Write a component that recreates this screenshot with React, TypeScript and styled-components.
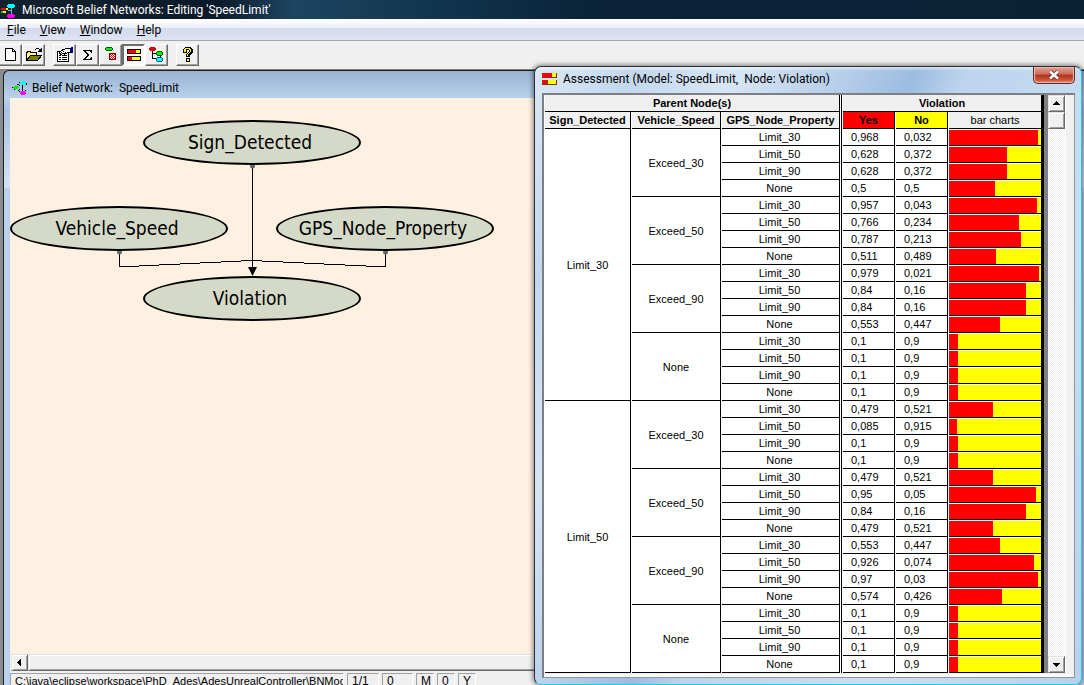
import React from 'react';
import styled, { createGlobalStyle } from 'styled-components';

const uiFont = 'Roboto, "Open Sans", sans-serif';
const gridFont = '"Liberation Sans", Arial, sans-serif';

const GlobalStyle = createGlobalStyle`
  * { box-sizing: border-box; }
  body { margin: 0; background: #f0f0f0; font-family: ${uiFont}; font-size: 12px; color: #000; }
  button { font: inherit; color: inherit; margin: 0; padding: 0; border-radius: 0; }
  svg { display: block; flex: none; }
`;

const Desktop = styled.div`
  position: relative;
  display: flex;
  flex-direction: column;
  height: 100vh;
  overflow: hidden;
`;

const TitleBar = styled.header`
  display: flex;
  align-items: center;
  gap: 6px;
  height: 19px;
  flex: none;
  color: #fff;
  background: linear-gradient(90deg, #14222f 0%, #0b1a2a 20%, #1d4560 27%, #12354f 40%, #0a2338 55%, #0b2136 100%);
`;

const AppTitle = styled.h1`
  margin: 0;
  font-size: 12px;
  font-weight: 400;
  line-height: 18px;
  white-space: pre;
`;

const MenuBar = styled.nav`
  display: flex;
  align-items: center;
  flex: none;
  height: 22px;
  padding-left: 7px;
  gap: 14px;
  border-top: 1px solid #fff;
  border-bottom: 1px solid #a9abb0;
  background: linear-gradient(#ffffff 0%, #e9edf7 40%, #d4daec 42%, #dfe4f3 100%);
`;

const MenuItem = styled.button`
  border: 0;
  background: none;
  line-height: 18px;
`;

const Toolbar = styled.div`
  display: flex;
  flex: none;
  height: 28px;
  margin-left: -1px;
  padding-top: 3px;
  background: #f0f0f0;
`;

const ToolGroup = styled.div`
  display: flex;
  margin-right: 8px;
`;

const ToolButton = styled.button<{ $pressed?: boolean }>`
  display: flex;
  align-items: center;
  justify-content: center;
  width: 23px;
  height: 22px;
  border: ${p => (p.$pressed ? '2px' : '1px')} solid;
  border-color: ${p => (p.$pressed ? '#6d6d6d #fff #fff #6d6d6d' : '#fff #696969 #696969 #fff')};
  box-shadow: ${p => (p.$pressed ? 'none' : 'inset -1px -1px 0 #a0a0a0')};
  background: ${p => (p.$pressed ? '#f8f8f8' : '#f0f0f0')};
`;

const Workspace = styled.main`
  flex: 1;
  min-height: 0;
  display: flex;
  padding: 0 0 0 3px;
  border-top: 1px solid #808080;
  background: #8a8c90;
`;

const NetworkWindow = styled.section`
  flex: 1;
  display: flex;
  flex-direction: column;
  min-width: 0;
  padding: 0 6px;
  border: solid #1b1d20;
  border-width: 1px 0 0 1px;
  border-top-left-radius: 6px;
  background: linear-gradient(#9ab3d2 0, #b9d1ea 27px, #a9c3e2 40px, #d4e3f3 116px, #b9d1ea 117px);
`;

const NetworkTitle = styled.div`
  display: flex;
  align-items: center;
  gap: 4px;
  height: 27px;
  flex: none;
  padding: 6px 0 0 2px;
`;

const WindowCaption = styled.h2`
  margin: 0;
  font-size: 12px;
  font-weight: 400;
  line-height: 16px;
  white-space: pre;
`;

const Canvas = styled.div`
  position: relative;
  flex: 1;
  min-height: 0;
  background: #fff1e2;
`;

const Edges = styled.svg`
  position: absolute;
  left: 0;
  top: 0;
`;

const Node = styled.div<{ $x: number; $y: number }>`
  position: absolute;
  left: ${p => p.$x}px;
  top: ${p => p.$y}px;
  width: 218px;
  height: 45px;
  border: 2px solid #000;
  border-radius: 50%;
  background: #d5dac8;
  font-family: "DejaVu Sans Condensed", "DejaVu Sans", sans-serif;
  font-size: 19px;
  line-height: 40px;
  text-align: center;
  padding-right: 4px;
`;

const HScroll = styled.div`
  display: flex;
  flex: none;
  height: 17px;
  padding-left: 1px;
  background: #f0f0f0;
`;

const ScrollPart = styled.button<{ $grow?: boolean }>`
  display: flex;
  align-items: center;
  justify-content: center;
  flex: ${p => (p.$grow ? '1' : 'none')};
  width: 17px;
  height: 17px;
  border: 1px solid;
  border-color: #e3e3e3 #696969 #696969 #e3e3e3;
  box-shadow: inset 1px 1px 0 #fff, inset -1px -1px 0 #a0a0a0;
  background: #f0f0f0;
`;

const StatusBar = styled.footer`
  display: flex;
  gap: 3px;
  flex: none;
  height: 14px;
  padding-top: 2px;
  overflow: hidden;
  background: #f0f0f0;
  font-family: ${gridFont};
`;

const StatusCell = styled.div<{ $w: number; $small?: boolean }>`
  width: ${p => p.$w}px;
  height: 18px;
  padding-left: 4px;
  border: 1px solid;
  border-color: #a0a0a0 #fff #fff #a0a0a0;
  font-size: ${p => (p.$small ? 11 : 12)}px;
  line-height: 14px;
  white-space: nowrap;
  overflow: hidden;
`;

const AssessmentWindow = styled.section`
  position: absolute;
  left: 534px;
  top: 66px;
  padding: 0 6px 6px 7px;
  border: 1px solid #2a2f36;
  border-right-color: #25c6e4;
  border-bottom-color: #25c6e4;
  border-radius: 7px;
  background:
    linear-gradient(#ffffff90, #ffffff00 4px),
    linear-gradient(115deg, #dbe8f5 0%, #c3d8ee 12%, #d7e6f5 24%, #b4cde8 38%, #9dbce0 46%, #bcd4ed 52%, #c9dff3 75%, #b8d2ec 100%);
  box-shadow: 0 0 5px 1px #00000080;
`;

const AssessmentTitle = styled.div`
  display: flex;
  justify-content: space-between;
  height: 26px;
`;

const CaptionGroup = styled.div`
  display: flex;
  align-items: center;
  gap: 5px;
  padding-bottom: 2px;
`;

const CloseButton = styled.button`
  display: flex;
  align-items: center;
  justify-content: center;
  width: 42px;
  height: 17px;
  border: 1px solid #5b2a26;
  border-top: 0;
  border-radius: 0 0 5px 5px;
  box-shadow: inset 0 0 1px 1px #f2b7a5;
  background: linear-gradient(#e0a295 0%, #cc6b5a 45%, #b3301a 50%, #c9543a 80%, #e08a62 100%);
`;

const Pane = styled.div`
  display: flex;
  border: solid;
  border-width: 2px 1px 1px 2px;
  border-color: #7d7f82 #8e959d #8e959d #7d7f82;
  padding-bottom: 4px;
  background: #f0f0f0;
  box-shadow: inset 0 -3px 0 #fafafa;
`;

const GridView = styled.div`
  width: 497px;
  overflow: hidden;
  background: #fff;
`;

const RightRule = styled.div`
  width: 7px;
  border-left: 3px solid #000;
  background: #808080;
`;

const DataTable = styled.table`
  table-layout: fixed;
  width: 498px;
  border-collapse: separate;
  border-spacing: 1px 0;
  font-family: ${gridFont};
  font-size: 11px;
  line-height: 16px;
`;

const HeadCell = styled.th<{ $bg?: string; $plain?: boolean; $open?: boolean }>`
  height: 17px;
  padding: 0;
  overflow: hidden;
  white-space: nowrap;
  font-weight: ${p => (p.$plain ? 400 : 700)};
  border-bottom: 1px solid #000;
  border-right: ${p => (p.$open ? '0' : '1px solid #000')};
  background: ${p => p.$bg ?? '#f0f0f0'};
`;

const Cell = styled.td<{ $value?: boolean }>`
  height: 17px;
  padding: ${p => (p.$value ? '0 0 0 8px' : '0 2px 0 0')};
  text-align: ${p => (p.$value ? 'left' : 'center')};
  border-bottom: 1px solid #000;
  border-right: 1px solid #000;
`;

const ParentCell = styled.td`
  padding: 0;
  text-align: center;
  vertical-align: middle;
  border-bottom: 1px solid #000;
  border-right: 1px solid #000;
`;

const Divider = styled.td`
  padding: 0;
  background: #000;
`;

const BarCell = styled.td`
  height: 17px;
  padding: 1px 0 0;
  border-bottom: 1px solid #000;
`;

const Bar = styled.div`
  height: 15px;
  background: #ff0;
`;

const BarFill = styled.div`
  height: 15px;
  background: #f00;
`;

const VScroll = styled.div`
  display: flex;
  flex-direction: column;
  width: 17px;
  background: repeating-conic-gradient(#ffffff 0 25%, #f0f0f0 0 50%) 0 0 / 2px 2px;
`;

const Track = styled.div`
  flex: 1;
`;

const Gutter = styled.div`
  width: 9px;
  border-left: 1px solid #fff;
`;

const signs = ['Limit_30', 'Limit_50'];
const speeds = ['Exceed_30', 'Exceed_50', 'Exceed_90', 'None'];
const limits = ['Limit_30', 'Limit_50', 'Limit_90', 'None'];
const yes = [
  968, 628, 628, 500, 957, 766, 787, 511, 979, 840, 840, 553, 100, 100, 100, 100,
  479, 85, 100, 100, 479, 950, 840, 479, 553, 926, 970, 574, 100, 100, 100, 100,
];
const format = (n: number) => String(n / 1000).replace('.', ',');

const Pixels = ({ w = 16, h = 16, children }: { w?: number; h?: number; children: React.ReactNode }) => (
  <svg width={w} height={h} viewBox={`0 0 ${w} ${h}`} shapeRendering="crispEdges" aria-hidden="true">
    {children}
  </svg>
);

const AppIcon = () => (
  <Pixels>
    <path d="M1 6h5v2H1z" fill="#e00" />
    <path d="M6 6h2v2H6zM1 9h5v2H1z" fill="#ff0" />
    <path d="M1 9h2v2H1z" fill="#0c0" />
    <path d="M11 5v8M8 8h3" stroke="#5fc0c0" fill="none" />
    <path d="M8 2h6v1h1v2h-1v1H8V5H7V3h1z" fill="#0ff" />
    <path d="M8 12h6v1h1v2h-1v1H8v-1H7v-2h1z" fill="#f0f" />
  </Pixels>
);

const NetworkIcon = () => (
  <Pixels>
    <path d="M10.500 5v6" stroke="#000" fill="none" />
    <path d="M5 4h2v1H5zM7 5h1v1H7zM7 9h1v1H7zM6 10h1v1H6zM7 11h1v1H7zM7 2h1v1H7zM14 3h1v2h-1zM2 9h1v1H2zM0 7h1v1H0zM8 13h1v1H8zM13 10h1v1h-1z" />
    <path d="M9 1h4v1h1v2h-1v1H9V4H8V2h1z" fill="#0ff" />
    <path d="M2 6h4v1h1v1H6v1H2V8H1V7h1z" fill="#0e0" />
    <path d="M9 11h4v1h1v2h-1v1H9v-1H8v-2h1z" fill="#f0f" />
  </Pixels>
);

const BarsIcon = () => (
  <Pixels>
    <path d="M1 2h14v5H1zM1 9h14v5H1z" />
    <path d="M2 3h8v3H2zM2 10h4v3H2z" fill="#f00" />
    <path d="M10 3h4v3h-4zM6 10h8v3H6z" fill="#ff0" />
  </Pixels>
);

const AssessmentIcon = () => (
  <Pixels>
    <path d="M0 2h15v5H0zM0 9h15v5H0z" fill="#7a3b08" />
    <path d="M0 2h10v4H0zM0 9h5v4H0z" fill="#f00" />
    <path d="M10 2h4v4h-4zM6 9h8v4H6z" fill="#ff0" />
  </Pixels>
);

const NewIcon = () => (
  <Pixels>
    <path d="M2.500 1.500h7l3 3v9h-10z" fill="#fff" stroke="#000" />
    <path d="M9.500 1.500v3h3" fill="none" stroke="#000" />
  </Pixels>
);

const OpenIcon = () => (
  <Pixels>
    <path d="M.5 13.500v-8h1v-1h3v1h6v3" fill="#ffff70" stroke="#000" />
    <path d="M.5 13.500l4-5h11l-4 5z" fill="#808000" stroke="#000" />
    <path d="M9 2h1V1h3v1h1v1h-1V2h-3v1H9zM15 1h1v4h-4V4h1V3h1V2h1z" />
  </Pixels>
);

const PropertiesIcon = () => (
  <Pixels>
    <path d="M.5 4.500h11v10H.5z" fill="#fff" stroke="#000" />
    <path d="M2 8.500h2M5 8.500h5M2 10.500h2M5 10.500h5M2 12.500h2M5 12.500h5" stroke="#000" />
    <path d="M2.500 5.500l3-3h2l1-1h5v4h-3l-3 2-1-1-3 1z" fill="#fff" stroke="#000" />
    <path d="M4 5h1v1H4zM6 4h1v1H6zM8 5h1v1H8zM7 6h1v1H7zM5 3h1v1H5z" />
    <path d="M14 0h2v6h-2zM13 1h1v4h-1z" fill="#000080" />
  </Pixels>
);

const SigmaIcon = () => (
  <Pixels>
    <path d="M3 3h9v3h-1V5h-1V4H6v1h1v1h1v1h1v2H8v1H7v1H6v1h4v-1h1v-1h1v3H3v-1h1v-1h1v-1h1V9h1V7H6V6H5V5H4V4H3z" />
  </Pixels>
);

const ExpandIcon = () => (
  <Pixels>
    <path d="M3 0h6v1h1v2H9v1H3V3H2V1h1z" fill="#006000" />
    <path d="M3 1h6v2H3z" fill="#0e0" />
    <path d="M6.500 6.500h6v6h-6z" fill="#fff" stroke="#800000" />
    <path d="M7 7h1v1H7zM9 7h1v1H9zM11 7h1v1h-1zM8 8h1v1H8zM10 8h1v1h-1zM7 9h1v1H7zM9 9h1v1H9zM11 9h1v1h-1zM8 10h1v1H8zM10 10h1v1h-1zM7 11h1v1H7zM9 11h1v1H9zM11 11h1v1h-1z" fill="#f00" />
  </Pixels>
);

const TreeIcon = () => (
  <Pixels>
    <path d="M3.500 4v7.500H8M4 6.500h4M11.500 8v3" fill="none" stroke="#000" />
    <path d="M1 0h5v1h1v2H6v1H1V3H0V1h1z" fill="#d00" />
    <path d="M8 4h5v1h1v3h-1v1H8V8H7V5h1z" fill="#006000" />
    <path d="M8 5h5v3H8z" fill="#0e0" />
    <path d="M8 10h5v1h1v3h-1v1H8v-1H7v-3h1z" fill="#006080" />
    <path d="M8 11h5v3H8z" fill="#0ff" />
  </Pixels>
);

const HelpIcon = () => (
  <Pixels>
    <path d="M5 0h6v1h1v1h1v4h-1v1h-1v1h-1v2H6V7h1V6h1V5h1V3H7v3H3V2h1V1h1zM6 11h4v4H6z" />
    <path d="M5 1h5v1h1v3h-1v1H9v1H8v2H7V7h1V6h1V5h1V3H9V2H6v3H4V2h1zM7 12h2v2H7z" fill="#ff0" />
  </Pixels>
);

const Arrow = ({ d }: { d: string }) => (
  <Pixels w={9} h={9}>
    <path d={d} />
  </Pixels>
);

const menus = ['File', 'View', 'Window', 'Help'];

const toolGroups: { name: string; icon: React.ReactNode; pressed?: boolean }[][] = [
  [
    { name: 'New', icon: <NewIcon /> },
    { name: 'Open', icon: <OpenIcon /> },
  ],
  [
    { name: 'Properties', icon: <PropertiesIcon /> },
    { name: 'Evaluate', icon: <SigmaIcon /> },
    { name: 'Expand', icon: <ExpandIcon /> },
    { name: 'Assess', icon: <BarsIcon />, pressed: true },
    { name: 'Dependencies', icon: <TreeIcon /> },
  ],
  [{ name: 'Help', icon: <HelpIcon /> }],
];

const nodes = [
  { name: 'Sign_Detected', x: 133, y: 22 },
  { name: 'Vehicle_Speed', x: 0, y: 108 },
  { name: 'GPS_Node_Property', x: 266, y: 108 },
  { name: 'Violation', x: 133, y: 178 },
];

function AssessmentTable() {
  return (
    <DataTable>
      <colgroup>
        {[86, 89, 118, 1, 52, 52, 92].map((w, i) => (
          <col key={i} width={w} />
        ))}
      </colgroup>
      <thead>
        <tr>
          <HeadCell colSpan={3}>Parent Node(s)</HeadCell>
          <Divider rowSpan={2} />
          <HeadCell colSpan={3} $open>Violation</HeadCell>
        </tr>
        <tr>
          <HeadCell>Sign_Detected</HeadCell>
          <HeadCell>Vehicle_Speed</HeadCell>
          <HeadCell>GPS_Node_Property</HeadCell>
          <HeadCell $bg="#f00">Yes</HeadCell>
          <HeadCell $bg="#ff0">No</HeadCell>
          <HeadCell $plain $open>bar charts</HeadCell>
        </tr>
      </thead>
      <tbody>
        {yes.map((p, i) => (
          <tr key={i}>
            {i % 16 === 0 && <ParentCell rowSpan={16}>{signs[i / 16]}</ParentCell>}
            {i % 4 === 0 && <ParentCell rowSpan={4}>{speeds[(i / 4) % 4]}</ParentCell>}
            <Cell>{limits[i % 4]}</Cell>
            {i === 0 && <Divider rowSpan={yes.length} />}
            <Cell $value>{format(p)}</Cell>
            <Cell $value>{format(1000 - p)}</Cell>
            <BarCell>
              <Bar>
                <BarFill style={{ width: `${p / 10}%` }} />
              </Bar>
            </BarCell>
          </tr>
        ))}
      </tbody>
    </DataTable>
  );
}

export default function App() {
  return (
    <Desktop>
      <GlobalStyle />
      <TitleBar>
        <AppIcon />
        <AppTitle>Microsoft Belief Networks: Editing 'SpeedLimit'</AppTitle>
      </TitleBar>
      <MenuBar>
        {menus.map(m => (
          <MenuItem key={m}>
            <u>{m[0]}</u>
            {m.slice(1)}
          </MenuItem>
        ))}
      </MenuBar>
      <Toolbar>
        {toolGroups.map((group, i) => (
          <ToolGroup key={i}>
            {group.map(t => (
              <ToolButton key={t.name} aria-label={t.name} $pressed={t.pressed}>
                {t.icon}
              </ToolButton>
            ))}
          </ToolGroup>
        ))}
      </Toolbar>
      <Workspace>
        <NetworkWindow>
          <NetworkTitle>
            <NetworkIcon />
            <WindowCaption>{'Belief Network:  SpeedLimit'}</WindowCaption>
          </NetworkTitle>
          <Canvas>
            <Edges width="500" height="230" aria-hidden="true">
              <g fill="none" stroke="#000" shapeRendering="crispEdges">
                <path d="M242.500 66v105" />
                <path d="M109.500 154v14.500h9L242 162.500l124 6h9.500V154" />
              </g>
              <path d="M238 169h9l-4.500 9z" />
              <g fill="#666">
                <circle cx="242.500" cy="68" r="2.500" />
                <circle cx="109.500" cy="154" r="2.500" />
                <circle cx="375.500" cy="154" r="2.500" />
              </g>
            </Edges>
            {nodes.map(n => (
              <Node key={n.name} $x={n.x} $y={n.y}>
                {n.name}
              </Node>
            ))}
          </Canvas>
          <HScroll>
            <ScrollPart aria-label="Scroll left">
              <Arrow d="M6 1v7H5V7H4V6H3V5H2V4h1V3h1V2h1V1z" />
            </ScrollPart>
            <ScrollPart $grow aria-label="Horizontal position" />
          </HScroll>
          <StatusBar>
            <StatusCell $w={334} $small>C:\java\eclipse\workspace\PhD_Ades\AdesUnrealController\BNMoc</StatusCell>
            <StatusCell $w={32}>1/1</StatusCell>
            <StatusCell $w={31}>0</StatusCell>
            <StatusCell $w={18}>M</StatusCell>
            <StatusCell $w={18}>0</StatusCell>
            <StatusCell $w={18}>Y</StatusCell>
          </StatusBar>
        </NetworkWindow>
      </Workspace>
      <AssessmentWindow>
        <AssessmentTitle>
          <CaptionGroup>
            <AssessmentIcon />
            <WindowCaption>{'Assessment (Model: SpeedLimit,  Node: Violation)'}</WindowCaption>
          </CaptionGroup>
          <CloseButton aria-label="Close">
            <svg width="14" height="12" viewBox="0 0 14 12" aria-hidden="true">
              <path d="M3 2.500l8 7M11 2.500l-8 7" stroke="#5a3a3a" strokeWidth="4" />
              <path d="M3 2.500l8 7M11 2.500l-8 7" stroke="#fff" strokeWidth="2.400" />
            </svg>
          </CloseButton>
        </AssessmentTitle>
        <Pane>
          <GridView>
            <AssessmentTable />
          </GridView>
          <RightRule />
          <VScroll>
            <ScrollPart aria-label="Scroll up">
              <Arrow d="M4 2h1v1h1v1h1v1h1v1H1V5h1V4h1V3h1z" />
            </ScrollPart>
            <ScrollPart aria-label="Vertical position" />
            <Track />
            <ScrollPart aria-label="Scroll down">
              <Arrow d="M1 3h7v1H7v1H6v1H5v1H4V6H3V5H2V4H1z" />
            </ScrollPart>
          </VScroll>
          <Gutter />
        </Pane>
      </AssessmentWindow>
    </Desktop>
  );
}
